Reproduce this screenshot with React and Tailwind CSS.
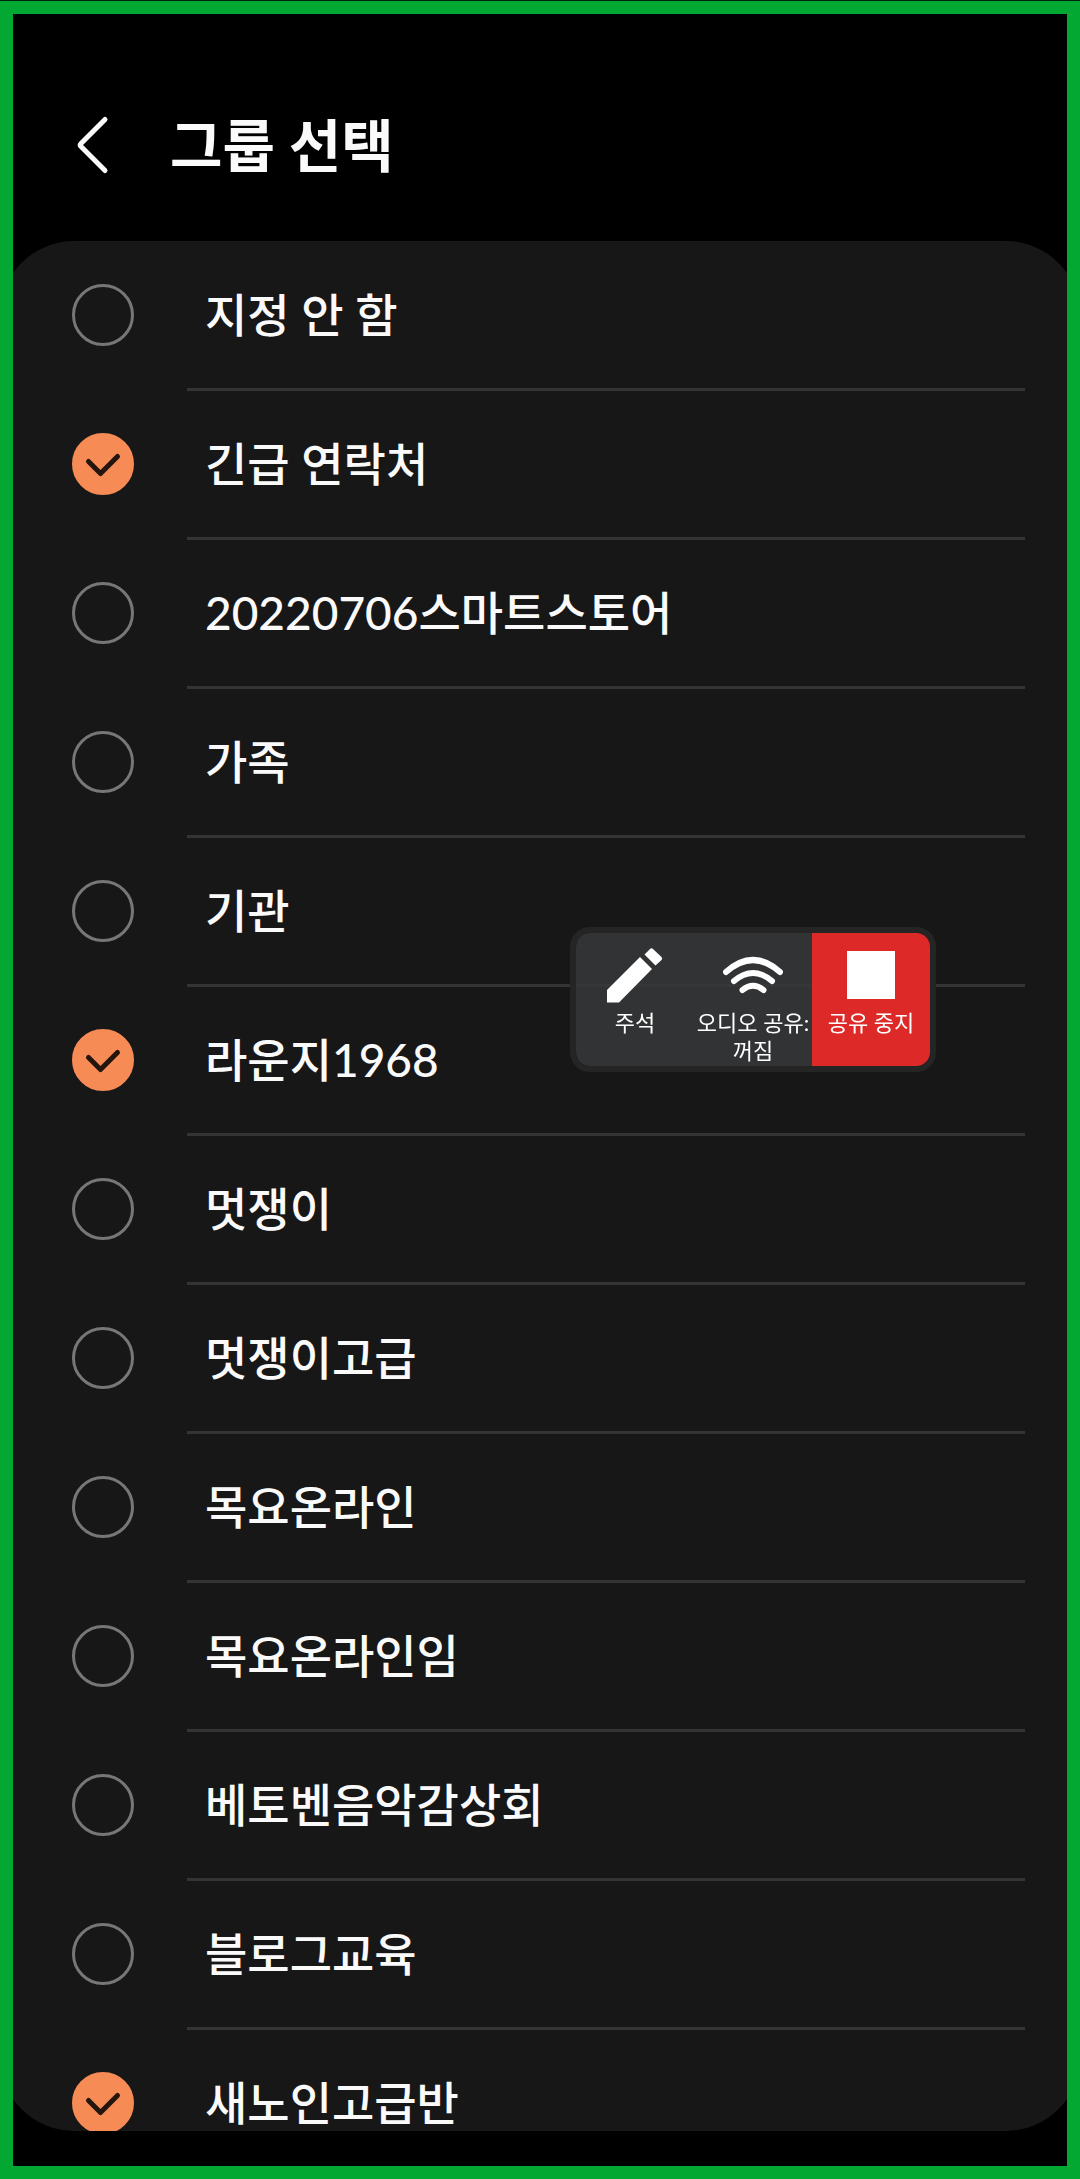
import { useState } from 'react';

const initialGroups = [
  { id: 1, name: '지정 안 함', checked: false },
  { id: 2, name: '긴급 연락처', checked: true },
  { id: 3, name: '20220706스마트스토어', checked: false },
  { id: 4, name: '가족', checked: false },
  { id: 5, name: '기관', checked: false },
  { id: 6, name: '라운지1968', checked: true },
  { id: 7, name: '멋쟁이', checked: false },
  { id: 8, name: '멋쟁이고급', checked: false },
  { id: 9, name: '목요온라인', checked: false },
  { id: 10, name: '목요온라인임', checked: false },
  { id: 11, name: '베토벤음악감상회', checked: false },
  { id: 12, name: '블로그교육', checked: false },
  { id: 13, name: '새노인고급반', checked: true },
];

const GroupRow = ({ group, onToggle }) => (
  <li>
    <label
      htmlFor={`group-${group.id}`}
      className="flex h-[146px] items-center pl-[72px]"
    >
      <span className="grid shrink-0">
        <input
          id={`group-${group.id}`}
          type="checkbox"
          checked={group.checked}
          onChange={() => onToggle(group.id)}
          className="col-start-1 row-start-1 size-[62px] appearance-none rounded-full border-[3px] border-[#777777] checked:border-[#f68b55] checked:bg-[#f68b55]"
        />
        {group.checked && (
          <svg
            viewBox="0 0 62 62"
            fill="none"
            stroke="#24160e"
            strokeWidth="5"
            strokeLinecap="round"
            strokeLinejoin="round"
            className="pointer-events-none col-start-1 row-start-1 size-[62px]"
          >
            <path d="M16.5 28.5 28.5 40.5 45.5 23.5" />
          </svg>
        )}
      </span>
      <span className="pl-[71px] text-[46px] leading-none font-medium text-[#fafafa]">
        {group.name}
      </span>
    </label>
    <div className="mr-[55px] ml-[187px] h-[3px] bg-[#343434]" />
  </li>
);

const ShareToolbar = () => (
  <div className="absolute top-[913px] right-[131px] grid h-[145px] w-[366px] grid-cols-3 overflow-hidden rounded-[20px] border-[6px] border-[#252525] bg-[#373839]/88 bg-clip-padding text-[22px] leading-[28px] text-white">
    <button type="button" className="flex flex-col items-center gap-[6px] pt-[14px]">
      <svg viewBox="0 0 56 56" fill="currentColor" className="size-[56px]">
        <path d="M0 43 33 10 45 22 12 55.5H0z" />
        <path d="M37.5 7.5 43 2q1.5-1.5 3 0L54.5 10q1.5 1.5 0 3L48.5 18.5z" />
      </svg>
      <span>주석</span>
    </button>
    <button type="button" className="flex flex-col items-center gap-[6px] pt-[14px]">
      <svg
        viewBox="0 0 60 56"
        fill="none"
        stroke="currentColor"
        strokeWidth="6"
        strokeLinecap="round"
        className="h-[56px] w-[60px]"
      >
        <path d="M3 25Q30 1 57 25" />
        <path d="M11 34Q30 18 49 34" />
        <path d="M19.5 43Q30 34.5 40.5 43" />
      </svg>
      <span className="whitespace-nowrap">
        오디오 공유:
        <br />
        꺼짐
      </span>
    </button>
    <button
      type="button"
      className="flex flex-col items-center gap-[6px] bg-[#dd2a28] pt-[14px]"
    >
      <svg viewBox="0 0 56 56" fill="currentColor" className="size-[56px]">
        <path d="M4 4h48v48H4z" />
      </svg>
      <span>공유 중지</span>
    </button>
  </div>
);

const App = () => {
  const [groups, setGroups] = useState(initialGroups);

  const handleToggle = (id) => {
    setGroups(groups.map((g) => (g.id === id ? { ...g, checked: !g.checked } : g)));
  };

  return (
    <div className="flex h-screen flex-col bg-[#04210b] pt-px font-['Lato','Noto_Sans_CJK_KR',sans-serif]">
      <div className="relative flex min-h-0 flex-1 flex-col overflow-hidden border-[13px] border-[#02a831] bg-black pb-[35px]">
        <header className="flex h-[227px] shrink-0 items-center pt-[72px] pb-[37px] pl-[62px]">
          <button type="button" aria-label="뒤로" className="text-[#fafafa]">
            <svg
              viewBox="0 0 40 60"
              fill="none"
              stroke="currentColor"
              strokeWidth="5"
              strokeLinecap="round"
              strokeLinejoin="round"
              className="h-[60px] w-[40px]"
            >
              <path d="M30 4.5 6 28.5q-1.5 1.5 0 3L30 55.5" />
            </svg>
          </button>
          <h1 className="pl-[55px] text-[57px] leading-none font-bold text-[#fafafa]">
            그룹 선택
          </h1>
        </header>

        <main className="-mx-[13px] min-h-0 flex-1 overflow-y-auto rounded-[74px] bg-[#171717] pt-px [scrollbar-width:none]">
          <ul>
            {groups.map((group) => (
              <GroupRow key={group.id} group={group} onToggle={handleToggle} />
            ))}
          </ul>
        </main>

        <ShareToolbar />
      </div>
    </div>
  );
};

export default App;
